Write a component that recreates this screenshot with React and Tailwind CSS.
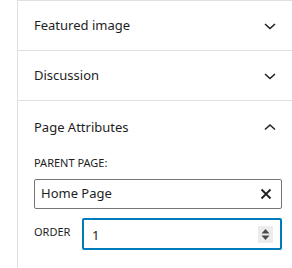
import React from 'react';

const Chevron = ({ up }) => (
  <svg width="24" height="24" viewBox="0 0 24 24" className="text-[#1e1e1e]">
    {up ? (
      <path d="M7 14.5 12 10l5 4.5" fill="none" stroke="currentColor" strokeWidth="1.5" />
    ) : (
      <path d="M7 10 12 14.5l5-4.5" fill="none" stroke="currentColor" strokeWidth="1.5" />
    )}
  </svg>
);

const PanelHeader = ({ title, open }) => (
  <div className="flex items-center justify-between pl-4 pr-[10px] h-full">
    <span className="text-[13px] text-[#1e1e1e] pt-[1px]">{title}</span>
    <Chevron up={open} />
  </div>
);

export default function App() {
  return (
    <div
      className="w-[292px] h-[268px] bg-white overflow-hidden"
      style={{ fontFamily: '"Noto Sans", "Open Sans", sans-serif' }}
    >
      <div className="ml-[17px] h-full border-l border-t border-[#e0e0e0]">
        {/* Featured image */}
        <div className="h-[50px] border-b border-[#e0e0e0]">
          <PanelHeader title="Featured image" />
        </div>

        {/* Discussion */}
        <div className="h-[50px] border-b border-[#e0e0e0]">
          <PanelHeader title="Discussion" />
        </div>

        {/* Page Attributes */}
        <div>
          <div className="h-[52px]">
            <PanelHeader title="Page Attributes" open />
          </div>
          <div className="pl-4 pr-[10px] pt-[2px]">
            <div className="text-[11px] leading-4 uppercase text-[#1e1e1e] mb-2">Parent Page:</div>
            <div className="h-[30px] border border-[#757575] rounded-[2px] flex items-center justify-between pl-[6px] pr-[8px]">
              <span className="text-[13px] text-[#1e1e1e]">Home Page</span>
              <svg width="14" height="14" viewBox="0 0 14 14">
                <path d="M2.5 2.5l9 9M11.5 2.5l-9 9" stroke="#1e1e1e" strokeWidth="1.8" />
              </svg>
            </div>
            <div className="flex items-start mt-[9px]">
              <span className="w-[48px] pt-[6px] text-[11px] leading-4 uppercase text-[#1e1e1e]">Order</span>
              <div className="flex-1 h-[32px] border-2 border-[#007cba] rounded-[2px] flex items-center justify-between pl-[8px] pr-[7px]">
                <span className="text-[13px] text-[#1e1e1e] pt-[3px]">1</span>
                <div className="w-[15px] h-[17px] bg-[#ececec] flex items-center justify-center">
                  <svg width="9" height="13" viewBox="0 0 9 13">
                    <path d="M4.5 1 8.5 5.5h-8z" fill="#4a4a4a" />
                    <path d="M4.5 12 8.5 7.5h-8z" fill="#4a4a4a" />
                  </svg>
                </div>
              </div>
            </div>
          </div>
        </div>
      </div>
    </div>
  );
}
